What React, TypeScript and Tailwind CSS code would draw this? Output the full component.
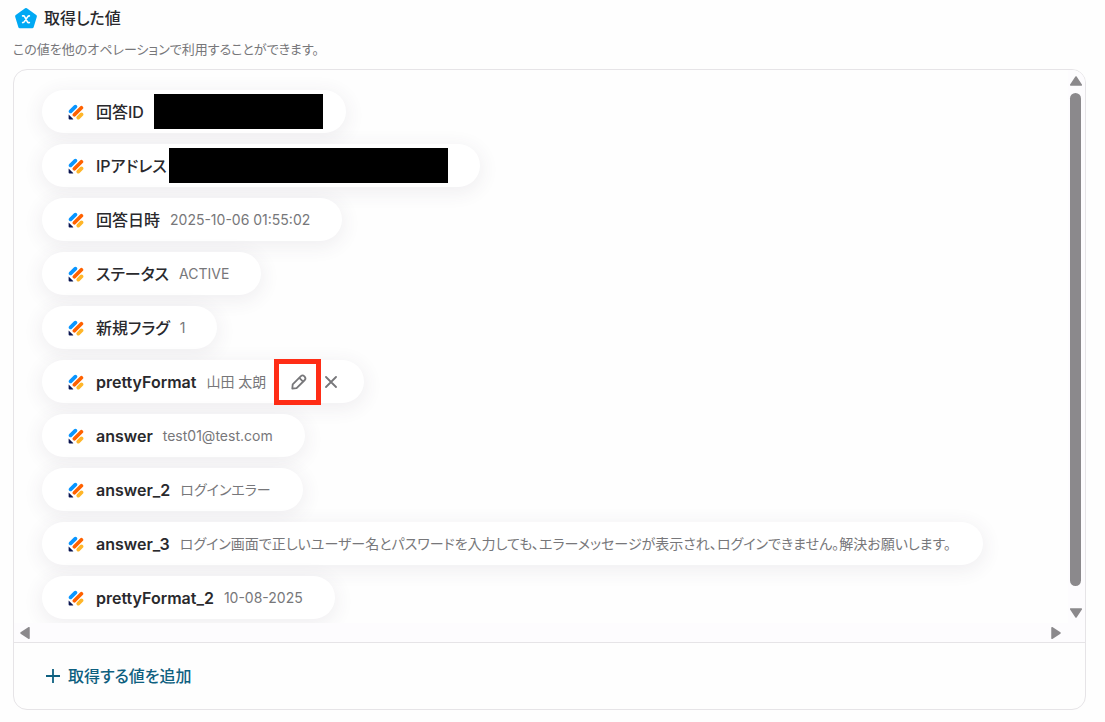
import type { ReactNode } from "react";

type Field = {
  label: string;
  value?: string;
  maskClass?: string;
  latin?: boolean;
  editable?: boolean;
};

const fields: Field[] = [
  { label: "回答ID", maskClass: "ml-[10px] -mr-[9px] w-[169px]" },
  { label: "IPアドレス", maskClass: "ml-[2px] w-[279px]" },
  { label: "回答日時", value: "2025-10-06 01:55:02" },
  { label: "ステータス", value: "ACTIVE" },
  { label: "新規フラグ", value: "1" },
  { label: "prettyFormat", value: "山田 太朗", latin: true, editable: true },
  { label: "answer", value: "test01@test.com", latin: true },
  { label: "answer_2", value: "ログインエラー", latin: true },
  {
    label: "answer_3",
    value: "ログイン画面で正しいユーザー名とパスワードを入力しても、エラーメッセージが表示され、ログインできません。解決お願いします。",
    latin: true,
  },
  { label: "prettyFormat_2", value: "10-08-2025", latin: true },
];

function VariableIcon() {
  return (
    <svg className="h-6 w-6 shrink-0" viewBox="0 0 24 24" aria-hidden="true">
      <path
        d="M12 3.6 L21.4 10.2 L18.2 20.8 H5.8 L2.6 10.2 Z"
        fill="#00a9f4"
        stroke="#00a9f4"
        strokeWidth="3"
        strokeLinejoin="round"
      />
      <path
        d="M8.6 9.9 H9.4 Q10.2 9.9 10.6 10.7 L13.4 15.8 Q13.8 16.6 14.6 16.6 H15.4 M15.4 9.9 Q14.2 9.9 13.6 10.9 L10.4 15.6 Q9.8 16.6 8.6 16.6"
        fill="none"
        stroke="#fff"
        strokeWidth="1.6"
        strokeLinecap="round"
      />
    </svg>
  );
}

function FormLogo() {
  return (
    <svg className="h-4 w-4 shrink-0" viewBox="0 0 16 16" aria-hidden="true">
      <path d="M2.6 7.4 L7.4 2.6" stroke="#0a96ff" strokeWidth="3.7" strokeLinecap="round" />
      <path d="M6.4 10.8 L13.4 3.8" stroke="#ff6100" strokeWidth="3.7" strokeLinecap="round" />
      <path d="M10.3 13.6 L13.5 10.4" stroke="#ffb629" strokeWidth="3.7" strokeLinecap="round" />
      <path d="M0.6 10.4 L5.2 15 Q5.3 15.5 4.7 15.5 H1.6 Q0.6 15.5 0.6 14.6 Z" fill="#0a1551" />
    </svg>
  );
}

function PencilIcon() {
  return (
    <svg className="h-[18px] w-[18px]" viewBox="0 0 18 18" fill="none" stroke="#77777a" strokeWidth="1.8" strokeLinejoin="round" aria-hidden="true">
      <path d="M2.3 15.7 L2.7 11.3 L10.9 3.1 Q12.6 1.6 14.4 3.3 Q16.3 5.2 14.8 7 L6.6 15.2 Z" />
      <path d="M9.3 4.8 L13.1 8.6" />
    </svg>
  );
}

function CloseIcon() {
  return (
    <svg className="h-3 w-3" viewBox="0 0 12 12" stroke="#77777a" strokeWidth="1.8" strokeLinecap="round" aria-hidden="true">
      <path d="M1 1 L11 11 M11 1 L1 11" />
    </svg>
  );
}

function ScrollArrow({ label, className, children }: { label: string; className: string; children: ReactNode }) {
  return (
    <button type="button" aria-label={label} className={`flex items-center justify-center ${className}`}>
      <svg className="h-[14px] w-[14px]" viewBox="0 0 14 14" fill="#8b898c" stroke="#8b898c" strokeWidth="1.5" strokeLinejoin="round">
        {children}
      </svg>
    </button>
  );
}

function FieldPill({ field }: { field: Field }) {
  return (
    <li className={`flex h-[43px] w-fit items-center whitespace-nowrap rounded-full bg-white pl-[26px] shadow-[0_4px_18px_3px_rgba(75,50,90,0.07)] ${field.editable ? "pr-[27px]" : "pr-8"}`}>
      <FormLogo />
      <span className={`ml-3 text-base text-[#29292d] ${field.latin ? "font-semibold" : "font-medium"}`}>{field.label}</span>
      {field.maskClass && <span className={`h-[35px] shrink-0 bg-black ${field.maskClass}`} />}
      {field.value && <span className="ml-[10px] text-sm text-[#77777a]">{field.value}</span>}
      {field.editable && (
        <>
          <button type="button" aria-label="編集" className="ml-2 flex h-[46px] w-[47px] items-center justify-center border-[5px] border-[#ff2d16] pl-[2px]">
            <PencilIcon />
          </button>
          <button type="button" aria-label="削除" className="ml-1 flex h-6 w-3 items-center justify-center">
            <CloseIcon />
          </button>
        </>
      )}
    </li>
  );
}

export default function App() {
  return (
    <main className="min-h-screen bg-[#fefefe] pb-3 pl-[13px] pr-[19px] pt-[6px] font-['Inter','Noto_Sans_CJK_JP',sans-serif] [font-feature-settings:'palt']">
      <header>
        <div className="flex h-6 items-center gap-[6px] pl-[1px]">
          <VariableIcon />
          <h1 className="text-base font-medium text-[#29292d]">取得した値</h1>
        </div>
        <p className="mt-[9px] text-[13px] leading-5 text-[#77777a]">この値を他のオペレーションで利用することができます。</p>
      </header>

      <section className="mt-[10px] overflow-hidden rounded-[14px] border border-[#e6e4e7]">
        <div className="flex">
          <ul className="flex min-w-0 flex-1 flex-col gap-[11px] overflow-hidden pb-1 pl-7 pt-5">
            {fields.map((field) => (
              <FieldPill key={field.label} field={field} />
            ))}
          </ul>
          <div className="flex w-[17px] flex-col items-center bg-[#fdfcfe] pr-[2px] pt-1">
            <ScrollArrow label="上へスクロール" className="h-[14px] w-[14px]">
              <path d="M7 3 L12.3 11 H1.7 Z" />
            </ScrollArrow>
            <div className="mb-5 mt-[5px] w-[11px] flex-1 rounded-full bg-[#8b898c]" />
            <ScrollArrow label="下へスクロール" className="mb-[3px] h-[14px] w-[14px]">
              <path d="M7 11 L1.7 3 H12.3 Z" />
            </ScrollArrow>
          </div>
        </div>
        <div className="flex h-5 items-center justify-between border-b border-[#e6e4e7] bg-[#fdfcfe] pl-1 pr-[22px]">
          <ScrollArrow label="左へスクロール" className="h-4 w-[14px]">
            <path d="M3 7 L11 1.7 V12.3 Z" />
          </ScrollArrow>
          <ScrollArrow label="右へスクロール" className="h-4 w-[14px]">
            <path d="M11 7 L3 12.3 V1.7 Z" />
          </ScrollArrow>
        </div>
        <div className="flex h-[66px] items-center pl-8">
          <button type="button" className="flex items-center gap-2 text-base font-medium text-[#0e6080]">
            <svg className="h-[14px] w-[14px]" viewBox="0 0 14 14" stroke="currentColor" strokeWidth="1.8" strokeLinecap="round" aria-hidden="true">
              <path d="M7 0 V14 M0 7 H14" />
            </svg>
            取得する値を追加
          </button>
        </div>
      </section>
    </main>
  );
}
